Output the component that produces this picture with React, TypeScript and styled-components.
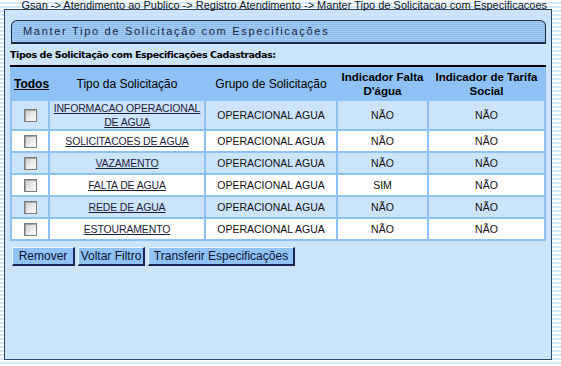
import React from "react";
import styled, { createGlobalStyle } from "styled-components";

const GlobalStyle = createGlobalStyle`
  html, body {
    margin: 0;
    padding: 0;
  }
  body {
    width: 561px;
    height: 366px;
    overflow: hidden;
    font-family: "Liberation Sans", Arial, sans-serif;
    background: repeating-linear-gradient(
      to bottom,
      #ffffff 0px,
      #ffffff 2px,
      #d4e7f8 2px,
      #d4e7f8 4px
    );
  }
`;

const Breadcrumb = styled.div`
  height: 9px;
  line-height: 10px;
  font-size: 11px;
  color: #101828;
  text-align: right;
  padding-right: 14px;
  white-space: nowrap;
`;

const Panel = styled.div`
  margin-left: 4px;
  width: 548px;
  height: 351px;
  border: 1px solid #2c4866;
  background: #cbe3fb;
  padding: 10px 5px 0 5px;
  box-sizing: border-box;
`;

const TitleBar = styled.div`
  margin-left: 1px;
  height: 24px;
  box-sizing: border-box;
  border: 1px solid #1c2a40;
  border-bottom: 2px solid #1c2a40;
  border-radius: 6px 6px 0 0;
  background: repeating-linear-gradient(
    to bottom,
    #a6cdf4 0px,
    #a6cdf4 1px,
    #88b8ec 1px,
    #88b8ec 2px
  );
  padding-left: 11px;
  font-size: 11px;
  line-height: 21px;
  letter-spacing: 1.7px;
  color: #1a2440;
`;

const Caption = styled.div`
  margin-top: 4px;
  font-family: "DejaVu Sans", Verdana, sans-serif;
  font-weight: bold;
  font-size: 9.5px;
  line-height: 14px;
  color: #000;
  letter-spacing: -0.42px;
`;

const Grid = styled.table`
  margin-top: 3px;
  width: 536px;
  border-collapse: separate;
  border-spacing: 2px;
  border-top: 2px solid #000;
  background: #8ec2f7;
  table-layout: fixed;
`;

const HeadCell = styled.th<{ $w: number; $bold?: boolean }>`
  box-sizing: border-box;
  width: ${(p) => p.$w}px;
  padding: 0 2px;
  height: 30px;
  font-size: ${(p) => (p.$bold ? 11.5 : 12)}px;
  font-weight: ${(p) => (p.$bold ? "bold" : "normal")};
  line-height: 14px;
  color: #000;
  text-align: center;
  vertical-align: middle;
`;

const AllLink = styled.span`
  font-weight: bold;
  text-decoration: underline;
  font-size: 12px;
`;

const Row = styled.tr<{ $odd: boolean }>`
  background: ${(p) => (p.$odd ? "#cbe3fb" : "#ffffff")};
`;

const Cell = styled.td<{ $tall?: boolean }>`
  height: ${(p) => (p.$tall ? 28 : 20)}px;
  padding: 0 1px;
  font-size: 10.5px;
  line-height: 14px;
  color: #111;
  text-align: center;
  vertical-align: middle;
`;

const TypeLink = styled.a`
  color: #1e1e3c;
  text-decoration: underline;
  letter-spacing: -0.15px;
`;

const Check = styled.span`
  display: inline-block;
  width: 11px;
  height: 11px;
  border: 1px solid #7c7c7c;
  background: linear-gradient(135deg, #c8c8c8 0%, #eeeeee 60%, #fafafa 100%);
  vertical-align: middle;
  box-shadow: inset 1px 1px 0 #a8a8a8;
`;

const Actions = styled.div`
  display: flex;
  gap: 3px;
  margin-top: 6px;
  margin-left: 2px;
`;

const Button = styled.button<{ $w: number }>`
  width: ${(p) => p.$w}px;
  height: 19px;
  padding: 0;
  box-sizing: border-box;
  font-family: "Liberation Sans", Arial, sans-serif;
  font-size: 12px;
  color: #0c1030;
  background: #90c4f8;
  border-style: solid;
  border-color: #eaf4ff #1a2456 #1a2456 #eaf4ff;
  border-width: 1px 2px 2px 1px;
  cursor: pointer;
`;

type Item = { tipo: string; grupo: string; falta: string; tarifa: string };

const items: Item[] = [
  { tipo: "INFORMACAO OPERACIONAL DE AGUA", grupo: "OPERACIONAL AGUA", falta: "NÃO", tarifa: "NÃO" },
  { tipo: "SOLICITACOES DE AGUA", grupo: "OPERACIONAL AGUA", falta: "NÃO", tarifa: "NÃO" },
  { tipo: "VAZAMENTO", grupo: "OPERACIONAL AGUA", falta: "NÃO", tarifa: "NÃO" },
  { tipo: "FALTA DE AGUA", grupo: "OPERACIONAL AGUA", falta: "SIM", tarifa: "NÃO" },
  { tipo: "REDE DE AGUA", grupo: "OPERACIONAL AGUA", falta: "NÃO", tarifa: "NÃO" },
  { tipo: "ESTOURAMENTO", grupo: "OPERACIONAL AGUA", falta: "NÃO", tarifa: "NÃO" },
];

export default function App() {
  return (
    <>
      <GlobalStyle />
      <Breadcrumb>
        Gsan -&gt; Atendimento ao Publico -&gt; Registro Atendimento -&gt; Manter Tipo de Solicitacao com Especificacoes
      </Breadcrumb>
      <Panel>
        <TitleBar>Manter Tipo de Solicitação com Especificações</TitleBar>
        <Caption>Tipos de Solicitação com Especificações Cadastradas:</Caption>
        <Grid>
          <thead>
            <tr>
              <HeadCell $w={36}>
                <AllLink>Todos</AllLink>
              </HeadCell>
              <HeadCell $w={154}>Tipo da Solicitação</HeadCell>
              <HeadCell $w={130}>Grupo de Solicitação</HeadCell>
              <HeadCell $w={89} $bold>
                Indicador Falta D'água
              </HeadCell>
              <HeadCell $w={115} $bold>
                Indicador de Tarifa Social
              </HeadCell>
            </tr>
          </thead>
          <tbody>
            {items.map((it, i) => (
              <Row key={it.tipo} $odd={i % 2 === 0}>
                <Cell $tall={i === 0}>
                  <Check />
                </Cell>
                <Cell $tall={i === 0}>
                  <TypeLink>{it.tipo}</TypeLink>
                </Cell>
                <Cell>{it.grupo}</Cell>
                <Cell>{it.falta}</Cell>
                <Cell>{it.tarifa}</Cell>
              </Row>
            ))}
          </tbody>
        </Grid>
        <Actions>
          <Button $w={63}>Remover</Button>
          <Button $w={67}>Voltar Filtro</Button>
          <Button $w={147}>Transferir Especificações</Button>
        </Actions>
      </Panel>
    </>
  );
}
